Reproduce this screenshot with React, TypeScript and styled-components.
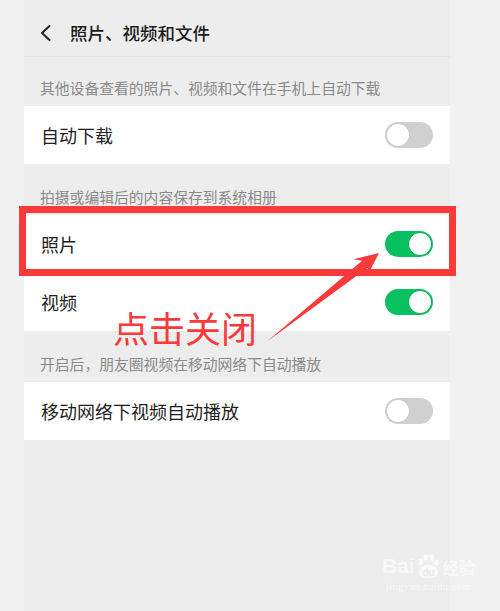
import React from "react";
import styled, { createGlobalStyle } from "styled-components";

const Global = createGlobalStyle`
  html, body { margin: 0; padding: 0; background: #f1f1f1; }
  * { box-sizing: border-box; }
`;

const FONT = `"Noto Sans CJK SC", "Noto Sans", sans-serif`;

const Stage = styled.div`
  position: relative;
  width: 500px;
  height: 611px;
  overflow: hidden;
  display: flex;
  background: #f1f1f1;
  font-family: ${FONT};
`;

const Panel = styled.div`
  margin-left: 24px;
  width: 426px;
  height: 611px;
  background: #ededed;
  display: flex;
  flex-direction: column;
`;

const Header = styled.div`
  height: 57px;
  display: flex;
  align-items: center;
  padding-left: 15px;
  padding-top: 10px;
  border-bottom: 1px solid #e4e4e4;
`;

const Title = styled.div`
  margin-left: 17px;
  font-size: 17.5px;
  font-weight: 500;
  color: #1c1c1c;
  line-height: 24px;
`;

const SectionLabel = styled.div<{ $first?: boolean }>`
  padding: ${(p) => (p.$first ? "21px" : "23px")} 16px 8px;
  font-size: 14.8px;
  line-height: 20px;
  color: #8a8a8a;
  white-space: nowrap;
`;

const Row = styled.div`
  height: 58px;
  background: #fff;
  display: flex;
  align-items: center;
  justify-content: space-between;
  padding: 0 17px 0 17px;
`;

const RowText = styled.span`
  font-size: 18px;
  color: #1e1e1e;
  line-height: 24px;
`;

const Track = styled.div<{ $on: boolean }>`
  width: 48px;
  height: 26px;
  border-radius: 13px;
  background: ${(p) => (p.$on ? "#07c160" : "#d0d0d0")};
  display: flex;
  align-items: center;
  justify-content: ${(p) => (p.$on ? "flex-end" : "flex-start")};
  padding: 0 2px;
`;

const Knob = styled.div<{ $on: boolean }>`
  width: 22px;
  height: 22px;
  border-radius: 50%;
  background: #fff;
  box-shadow: 0 0 0 0.5px ${(p) => (p.$on ? "#0aa552" : "#c4c4c4")};
`;

const Toggle = ({ on }: { on: boolean }) => (
  <Track $on={on}>
    <Knob $on={on} />
  </Track>
);

const RedBox = styled.div`
  position: absolute;
  left: 19px;
  top: 206px;
  width: 437px;
  height: 70px;
  border: 7px solid #f83a3a;
  pointer-events: none;
`;

const Callout = styled.div`
  position: absolute;
  left: 113px;
  top: 308px;
  font-size: 36px;
  line-height: 38px;
  color: #f83a3a;
  font-family: ${FONT};
  white-space: nowrap;
`;

const ArrowSvg = styled.svg`
  position: absolute;
  left: 0;
  top: 0;
  pointer-events: none;
`;

const Watermark = styled.div`
  position: absolute;
  left: 382px;
  top: 553px;
  display: flex;
  flex-direction: column;
  align-items: center;
  color: rgba(255, 255, 255, 0.75);
  opacity: 0.85;
  pointer-events: none;
`;

const WmTop = styled.div`
  display: flex;
  align-items: flex-end;
  font-family: "Liberation Sans", Arial, sans-serif;
  font-weight: 700;
  font-size: 21px;
  line-height: 22px;
`;

const WmCn = styled.span`
  font-family: ${FONT};
  font-size: 16px;
  font-weight: 700;
  margin-left: 2px;
  line-height: 20px;
`;

const WmSub = styled.div`
  font-family: "Liberation Serif", serif;
  font-size: 11px;
  line-height: 14px;
  margin-top: 2px;
  letter-spacing: 0.2px;
`;

const Paw = () => (
  <svg width="26" height="26" viewBox="0 0 26 26" style={{ marginBottom: -2 }}>
    <g fill="rgba(255,255,255,0.8)">
      <ellipse cx="6" cy="9" rx="2.6" ry="3.2" />
      <ellipse cx="11" cy="4.5" rx="2.6" ry="3.2" />
      <ellipse cx="17" cy="4.5" rx="2.6" ry="3.2" />
      <ellipse cx="21.5" cy="9.5" rx="2.6" ry="3.2" />
      <path d="M4 20 C4 14 9 11.5 13.5 11.5 C18 11.5 23 14 23 20 C23 24 19 25 13.5 25 C8 25 4 24 4 20 Z" />
    </g>
    <text x="13.5" y="22.5" textAnchor="middle" fontSize="10" fontFamily="Liberation Sans, sans-serif" fontWeight="700" fill="#e8e8e8">du</text>
  </svg>
);

export default function App() {
  return (
    <>
      <Global />
      <Stage>
        <Panel>
          <Header>
            <svg width="14" height="18" viewBox="0 0 14 18">
              <polyline points="10.5,2 3,9 10.5,16" fill="none" stroke="#222" strokeWidth="2" strokeLinecap="round" strokeLinejoin="round" />
            </svg>
            <Title>照片、视频和文件</Title>
          </Header>
          <SectionLabel $first>其他设备查看的照片、视频和文件在手机上自动下载</SectionLabel>
          <Row>
            <RowText>自动下载</RowText>
            <Toggle on={false} />
          </Row>
          <SectionLabel>拍摄或编辑后的内容保存到系统相册</SectionLabel>
          <Row>
            <RowText>照片</RowText>
            <Toggle on={true} />
          </Row>
          <Row>
            <RowText>视频</RowText>
            <Toggle on={true} />
          </Row>
          <SectionLabel>开启后，朋友圈视频在移动网络下自动播放</SectionLabel>
          <Row>
            <RowText>移动网络下视频自动播放</RowText>
            <Toggle on={false} />
          </Row>
        </Panel>
        <RedBox />
        <Callout>点击关闭</Callout>
        <ArrowSvg width="500" height="611" viewBox="0 0 500 611">
          <polygon
            points="379,253 353.4,259.3 362.1,260.7 267,341.5 367.7,267.7 367,276.5"
            fill="#f83a3a"
          />
        </ArrowSvg>
        <Watermark>
          <WmTop>
            Bai
            <Paw />
            <WmCn>经验</WmCn>
          </WmTop>
          <WmSub>jingyan.baidu.com</WmSub>
        </Watermark>
      </Stage>
    </>
  );
}
